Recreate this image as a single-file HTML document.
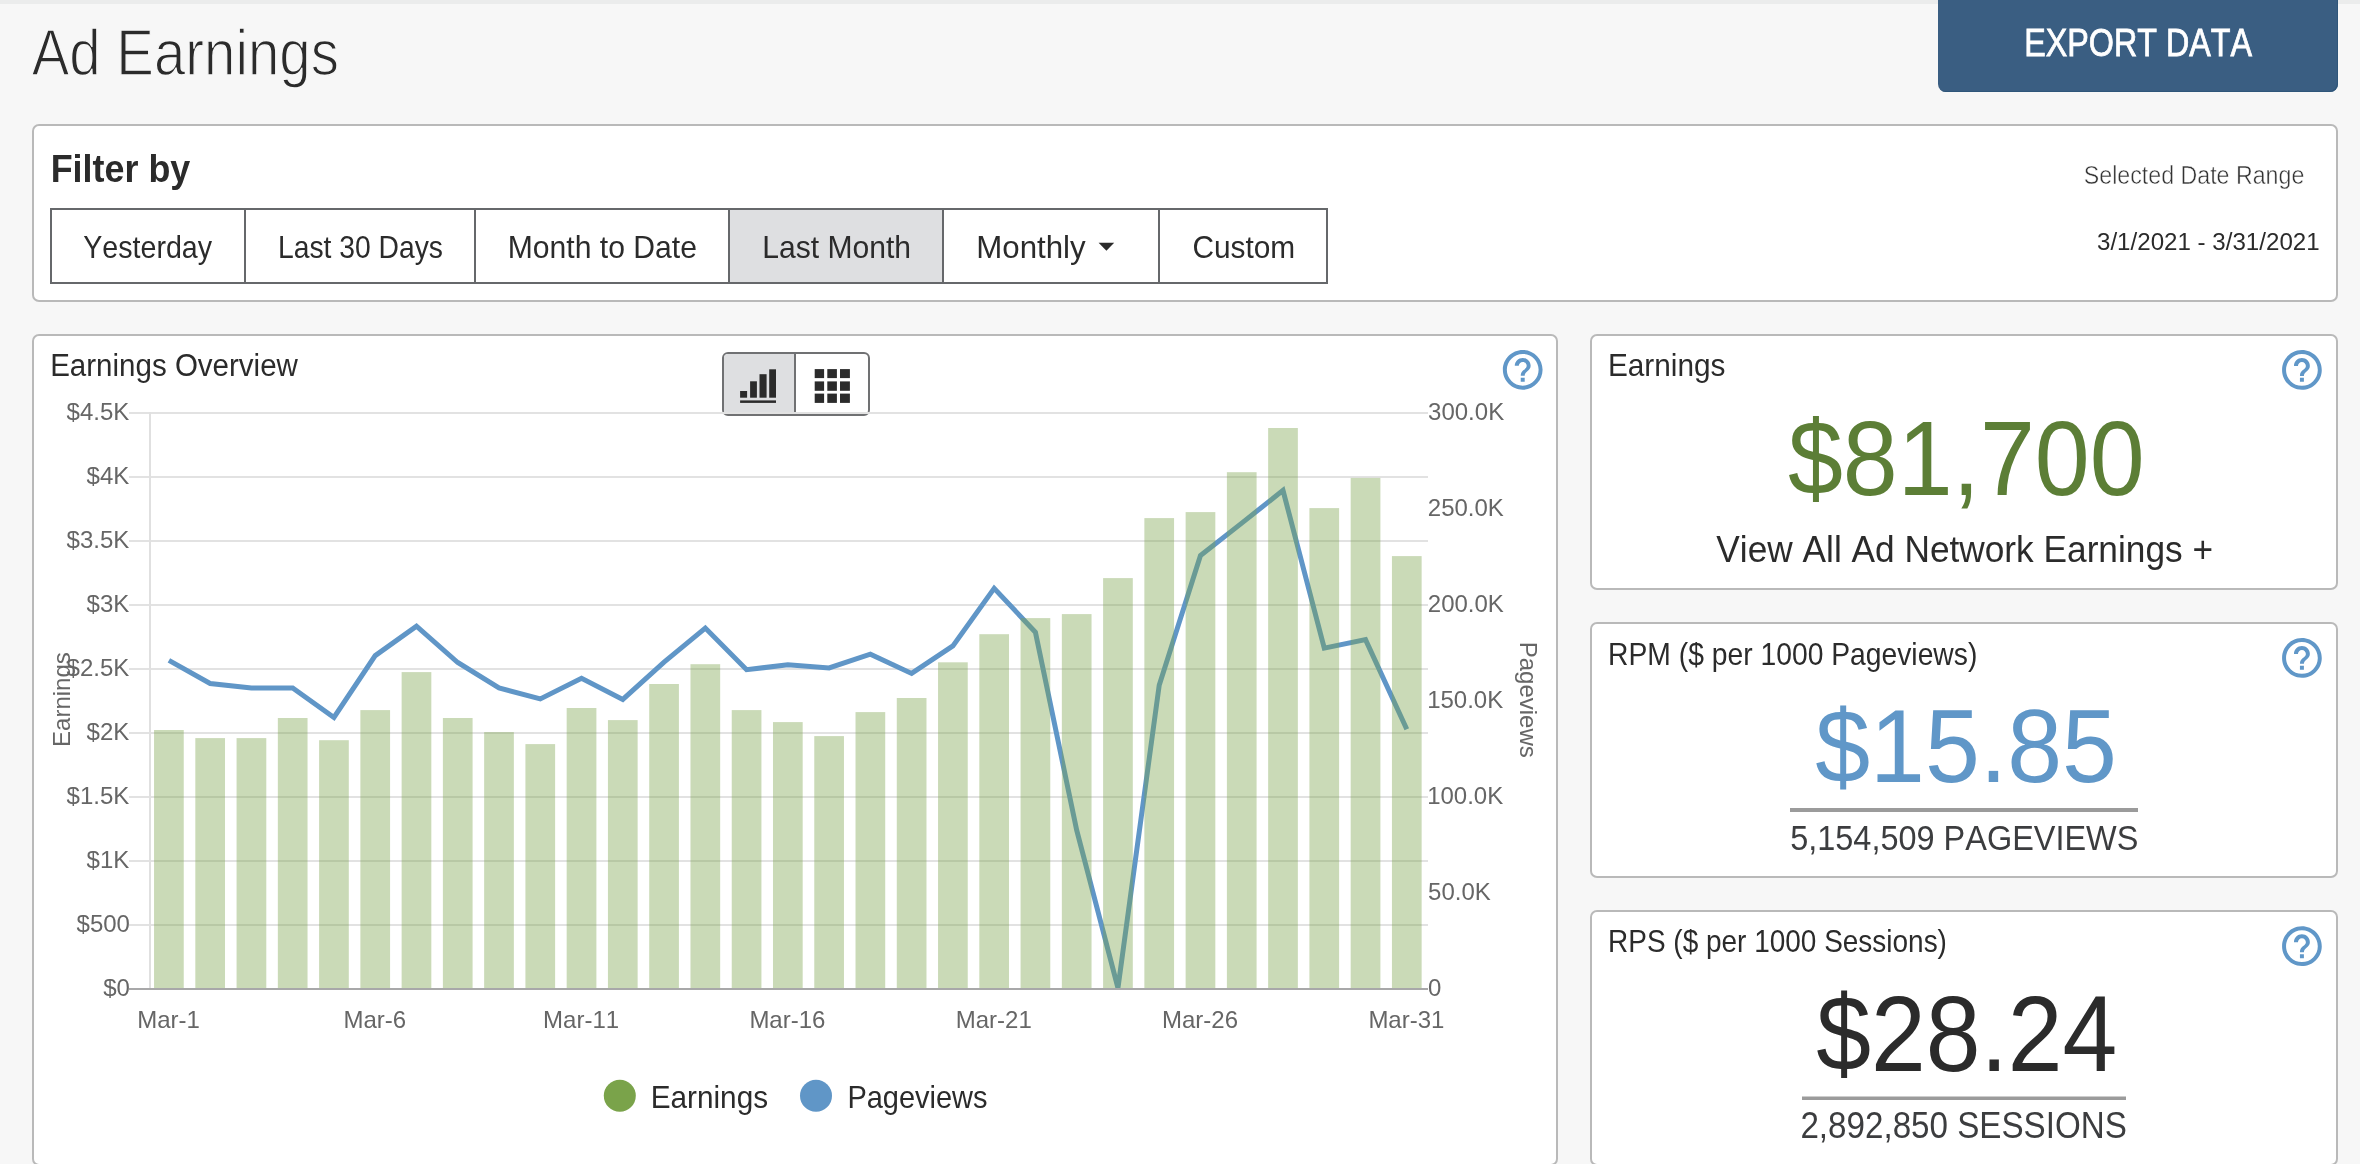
<!DOCTYPE html>
<html><head><meta charset="utf-8"><title>Ad Earnings</title>
<style>
html,body{margin:0;padding:0;}
body{width:2360px;height:1164px;overflow:hidden;background:#f7f7f7;position:relative;font-family:"Liberation Sans",sans-serif;}
.abs{position:absolute;box-sizing:border-box;}
.topband{left:0;top:0;width:2360px;height:4px;background:#ebecec;}
.export{left:1938px;top:-10px;width:400px;height:102px;background:#3a5e82;border-radius:0 0 8px 8px;box-shadow:inset -1px -1px 0 #2f567a;}
.card{background:#fff;border:2px solid #b9b9b9;border-radius:7px;}
.btngroup{left:50px;top:208px;width:1278px;height:76px;border:2px solid #66686b;background:#fff;}
.div{top:208px;width:2px;height:76px;background:#66686b;}
.active{left:730px;top:210px;width:212px;height:72px;background:#dedfe1;}
.toggle{left:722px;top:352px;width:148px;height:64px;border:2px solid #707173;border-radius:6px;background:#fff;overflow:hidden;}
.toggle .on{position:absolute;left:0;top:0;width:70px;height:60px;background:#dedfe1;}
.toggle .sep{position:absolute;left:70px;top:0;width:2px;height:60px;background:#707173;}
svg{position:absolute;left:0;top:0;will-change:transform;}
svg text{font-family:"Liberation Sans",sans-serif;font-kerning:none;}
</style></head>
<body>
<div class="abs topband"></div>
<div class="abs export"></div>
<div class="abs card" style="left:32px;top:124px;width:2306px;height:178px;"></div>
<div class="abs btngroup"></div>
<div class="abs active"></div>
<div class="abs div" style="left:244px"></div>
<div class="abs div" style="left:474px"></div>
<div class="abs div" style="left:728px"></div>
<div class="abs div" style="left:942px"></div>
<div class="abs div" style="left:1158px"></div>
<div class="abs card" style="left:32px;top:334px;width:1526px;height:832px;"></div>
<div class="abs card" style="left:1590px;top:334px;width:748px;height:256px;"></div>
<div class="abs card" style="left:1590px;top:622px;width:748px;height:256px;"></div>
<div class="abs card" style="left:1590px;top:910px;width:748px;height:256px;"></div>
<div class="abs toggle"><div class="on"></div><div class="sep"></div></div>
<svg width="2360" height="1164" viewBox="0 0 2360 1164">
<rect x="129" y="412" width="1299" height="2" fill="#e2e2e2"/>
<rect x="129" y="476" width="1299" height="2" fill="#e2e2e2"/>
<rect x="129" y="540" width="1299" height="2" fill="#e2e2e2"/>
<rect x="129" y="604" width="1299" height="2" fill="#e2e2e2"/>
<rect x="129" y="668" width="1299" height="2" fill="#e2e2e2"/>
<rect x="129" y="732" width="1299" height="2" fill="#e2e2e2"/>
<rect x="129" y="796" width="1299" height="2" fill="#e2e2e2"/>
<rect x="129" y="860" width="1299" height="2" fill="#e2e2e2"/>
<rect x="129" y="924" width="1299" height="2" fill="#e2e2e2"/>
<rect x="149" y="412" width="2" height="576" fill="#e0e0e0"/>
<clipPath id="plot"><rect x="140" y="300" width="1300" height="688"/></clipPath>
<polyline clip-path="url(#plot)" points="168.90,660.40 210.16,683.50 251.43,687.90 292.69,687.90 333.95,717.50 375.22,655.60 416.48,626.10 457.74,662.50 499.00,687.90 540.27,698.90 581.53,678.30 622.79,699.40 664.06,662.10 705.32,628.10 746.58,669.70 787.84,664.80 829.11,667.90 870.37,654.20 911.63,673.40 952.90,645.90 994.16,588.40 1035.42,632.20 1076.69,830.20 1117.95,988.00 1159.21,685.20 1200.48,555.50 1241.74,523.10 1283.00,490.40 1324.26,648.10 1365.53,639.60 1406.79,729.30" fill="none" stroke="#6096c7" stroke-width="5" stroke-linejoin="miter" stroke-miterlimit="10"/>
<rect x="154.05" y="730.00" width="29.7" height="258.00" fill="rgb(122,163,74)" fill-opacity="0.4"/>
<rect x="195.31" y="738.10" width="29.7" height="249.90" fill="rgb(122,163,74)" fill-opacity="0.4"/>
<rect x="236.58" y="738.10" width="29.7" height="249.90" fill="rgb(122,163,74)" fill-opacity="0.4"/>
<rect x="277.84" y="718.00" width="29.7" height="270.00" fill="rgb(122,163,74)" fill-opacity="0.4"/>
<rect x="319.10" y="740.20" width="29.7" height="247.80" fill="rgb(122,163,74)" fill-opacity="0.4"/>
<rect x="360.37" y="710.10" width="29.7" height="277.90" fill="rgb(122,163,74)" fill-opacity="0.4"/>
<rect x="401.63" y="672.10" width="29.7" height="315.90" fill="rgb(122,163,74)" fill-opacity="0.4"/>
<rect x="442.89" y="718.00" width="29.7" height="270.00" fill="rgb(122,163,74)" fill-opacity="0.4"/>
<rect x="484.15" y="732.10" width="29.7" height="255.90" fill="rgb(122,163,74)" fill-opacity="0.4"/>
<rect x="525.42" y="744.10" width="29.7" height="243.90" fill="rgb(122,163,74)" fill-opacity="0.4"/>
<rect x="566.68" y="708.00" width="29.7" height="280.00" fill="rgb(122,163,74)" fill-opacity="0.4"/>
<rect x="607.94" y="720.10" width="29.7" height="267.90" fill="rgb(122,163,74)" fill-opacity="0.4"/>
<rect x="649.21" y="684.00" width="29.7" height="304.00" fill="rgb(122,163,74)" fill-opacity="0.4"/>
<rect x="690.47" y="664.20" width="29.7" height="323.80" fill="rgb(122,163,74)" fill-opacity="0.4"/>
<rect x="731.73" y="710.10" width="29.7" height="277.90" fill="rgb(122,163,74)" fill-opacity="0.4"/>
<rect x="772.99" y="722.10" width="29.7" height="265.90" fill="rgb(122,163,74)" fill-opacity="0.4"/>
<rect x="814.26" y="736.10" width="29.7" height="251.90" fill="rgb(122,163,74)" fill-opacity="0.4"/>
<rect x="855.52" y="712.10" width="29.7" height="275.90" fill="rgb(122,163,74)" fill-opacity="0.4"/>
<rect x="896.78" y="698.00" width="29.7" height="290.00" fill="rgb(122,163,74)" fill-opacity="0.4"/>
<rect x="938.05" y="662.30" width="29.7" height="325.70" fill="rgb(122,163,74)" fill-opacity="0.4"/>
<rect x="979.31" y="634.20" width="29.7" height="353.80" fill="rgb(122,163,74)" fill-opacity="0.4"/>
<rect x="1020.57" y="618.10" width="29.7" height="369.90" fill="rgb(122,163,74)" fill-opacity="0.4"/>
<rect x="1061.84" y="614.10" width="29.7" height="373.90" fill="rgb(122,163,74)" fill-opacity="0.4"/>
<rect x="1103.10" y="578.10" width="29.7" height="409.90" fill="rgb(122,163,74)" fill-opacity="0.4"/>
<rect x="1144.36" y="518.10" width="29.7" height="469.90" fill="rgb(122,163,74)" fill-opacity="0.4"/>
<rect x="1185.63" y="512.10" width="29.7" height="475.90" fill="rgb(122,163,74)" fill-opacity="0.4"/>
<rect x="1226.89" y="472.20" width="29.7" height="515.80" fill="rgb(122,163,74)" fill-opacity="0.4"/>
<rect x="1268.15" y="428.00" width="29.7" height="560.00" fill="rgb(122,163,74)" fill-opacity="0.4"/>
<rect x="1309.41" y="508.10" width="29.7" height="479.90" fill="rgb(122,163,74)" fill-opacity="0.4"/>
<rect x="1350.68" y="477.90" width="29.7" height="510.10" fill="rgb(122,163,74)" fill-opacity="0.4"/>
<rect x="1391.94" y="556.10" width="29.7" height="431.90" fill="rgb(122,163,74)" fill-opacity="0.4"/>
<rect x="129" y="988" width="1299" height="2" fill="#a8a8a9"/>
<circle cx="619.8" cy="1095.8" r="16" fill="#7aa34a"/>
<circle cx="816" cy="1095.8" r="16" fill="#6096c7"/>
<path transform="translate(1498.90,346.00) scale(1.985)" d="M11 18h2v-2h-2v2zm1-16C6.48 2 2 6.48 2 12s4.48 10 10 10 10-4.48 10-10S17.52 2 12 2zm0 18c-4.41 0-8-3.59-8-8s3.59-8 8-8 8 3.59 8 8-3.59 8-8 8zm0-14c-2.21 0-4 1.79-4 4h2c0-1.1.9-2 2-2s2 .9 2 2c0 2-3 1.75-3 5h2c0-2.25 3-2.5 3-5 0-2.21-1.79-4-4-4z" fill="#6097c8"/>
<path transform="translate(2278.10,346.10) scale(1.985)" d="M11 18h2v-2h-2v2zm1-16C6.48 2 2 6.48 2 12s4.48 10 10 10 10-4.48 10-10S17.52 2 12 2zm0 18c-4.41 0-8-3.59-8-8s3.59-8 8-8 8 3.59 8 8-3.59 8-8 8zm0-14c-2.21 0-4 1.79-4 4h2c0-1.1.9-2 2-2s2 .9 2 2c0 2-3 1.75-3 5h2c0-2.25 3-2.5 3-5 0-2.21-1.79-4-4-4z" fill="#6097c8"/>
<path transform="translate(2278.10,634.10) scale(1.985)" d="M11 18h2v-2h-2v2zm1-16C6.48 2 2 6.48 2 12s4.48 10 10 10 10-4.48 10-10S17.52 2 12 2zm0 18c-4.41 0-8-3.59-8-8s3.59-8 8-8 8 3.59 8 8-3.59 8-8 8zm0-14c-2.21 0-4 1.79-4 4h2c0-1.1.9-2 2-2s2 .9 2 2c0 2-3 1.75-3 5h2c0-2.25 3-2.5 3-5 0-2.21-1.79-4-4-4z" fill="#6097c8"/>
<path transform="translate(2278.10,922.40) scale(1.985)" d="M11 18h2v-2h-2v2zm1-16C6.48 2 2 6.48 2 12s4.48 10 10 10 10-4.48 10-10S17.52 2 12 2zm0 18c-4.41 0-8-3.59-8-8s3.59-8 8-8 8 3.59 8 8-3.59 8-8 8zm0-14c-2.21 0-4 1.79-4 4h2c0-1.1.9-2 2-2s2 .9 2 2c0 2-3 1.75-3 5h2c0-2.25 3-2.5 3-5 0-2.21-1.79-4-4-4z" fill="#6097c8"/>
<rect x="740.1" y="391.0" width="7.0" height="6.7" fill="#2b2b2b"/>
<rect x="750.1" y="381.3" width="6.8" height="16.4" fill="#2b2b2b"/>
<rect x="759.5" y="374.2" width="7.1" height="23.5" fill="#2b2b2b"/>
<rect x="769.2" y="369.3" width="6.8" height="28.4" fill="#2b2b2b"/>
<rect x="740.1" y="400.4" width="35.9" height="2.5" fill="#2b2b2b"/>
<rect x="814.7" y="369.1" width="9.4" height="9.0" fill="#2b2b2b"/>
<rect x="814.7" y="381.4" width="9.4" height="9.4" fill="#2b2b2b"/>
<rect x="814.7" y="393.6" width="9.4" height="9.3" fill="#2b2b2b"/>
<rect x="827.3" y="369.1" width="9.6" height="9.0" fill="#2b2b2b"/>
<rect x="827.3" y="381.4" width="9.6" height="9.4" fill="#2b2b2b"/>
<rect x="827.3" y="393.6" width="9.6" height="9.3" fill="#2b2b2b"/>
<rect x="840.0" y="369.1" width="9.9" height="9.0" fill="#2b2b2b"/>
<rect x="840.0" y="381.4" width="9.9" height="9.4" fill="#2b2b2b"/>
<rect x="840.0" y="393.6" width="9.9" height="9.3" fill="#2b2b2b"/>
<path d="M1098.6 242.7 L1114.2 242.7 L1106.4 250.8 Z" fill="#2b2b2b"/>
<text x="31.69" y="74.70" font-size="64.10" font-weight="normal" fill="#2b2b2b" textLength="307.25" lengthAdjust="spacingAndGlyphs" stroke="#f7f7f7" stroke-width="1.4">Ad Earnings</text>
<text x="2024.25" y="55.90" font-size="38.37" font-weight="normal" fill="#ffffff" textLength="227.81" lengthAdjust="spacingAndGlyphs" stroke="#ffffff" stroke-width="0.8">EXPORT DATA</text>
<text x="50.70" y="181.90" font-size="38.81" font-weight="bold" fill="#2b2b2b" textLength="139.59" lengthAdjust="spacingAndGlyphs">Filter by</text>
<text x="2083.75" y="184.10" font-size="26.60" font-weight="normal" fill="#333333" textLength="220.58" lengthAdjust="spacingAndGlyphs" stroke="#ffffff" stroke-width="0.5">Selected Date Range</text>
<text x="2096.98" y="249.70" font-size="24.42" font-weight="normal" fill="#2b2b2b" textLength="222.70" lengthAdjust="spacingAndGlyphs">3/1/2021 - 3/31/2021</text>
<text x="83.27" y="258.00" font-size="31.10" font-weight="normal" fill="#2b2b2b" textLength="128.78" lengthAdjust="spacingAndGlyphs">Yesterday</text>
<text x="277.98" y="258.00" font-size="31.10" font-weight="normal" fill="#2b2b2b" textLength="165.04" lengthAdjust="spacingAndGlyphs">Last 30 Days</text>
<text x="507.73" y="258.00" font-size="31.10" font-weight="normal" fill="#2b2b2b" textLength="189.21" lengthAdjust="spacingAndGlyphs">Month to Date</text>
<text x="762.23" y="258.00" font-size="31.10" font-weight="normal" fill="#2b2b2b" textLength="148.82" lengthAdjust="spacingAndGlyphs">Last Month</text>
<text x="976.24" y="258.00" font-size="31.10" font-weight="normal" fill="#2b2b2b" textLength="109.42" lengthAdjust="spacingAndGlyphs">Monthly</text>
<text x="1192.38" y="258.00" font-size="31.10" font-weight="normal" fill="#2b2b2b" textLength="102.88" lengthAdjust="spacingAndGlyphs">Custom</text>
<text x="50.18" y="375.80" font-size="30.81" font-weight="normal" fill="#2b2b2b" textLength="247.75" lengthAdjust="spacingAndGlyphs">Earnings Overview</text>
<text x="66.55" y="419.80" font-size="24.00" font-weight="normal" fill="#666666">$4.5K</text>
<text x="86.57" y="483.77" font-size="24.00" font-weight="normal" fill="#666666">$4K</text>
<text x="66.55" y="547.73" font-size="24.00" font-weight="normal" fill="#666666">$3.5K</text>
<text x="86.57" y="611.70" font-size="24.00" font-weight="normal" fill="#666666">$3K</text>
<text x="66.55" y="675.67" font-size="24.00" font-weight="normal" fill="#666666">$2.5K</text>
<text x="86.57" y="739.63" font-size="24.00" font-weight="normal" fill="#666666">$2K</text>
<text x="66.55" y="803.60" font-size="24.00" font-weight="normal" fill="#666666">$1.5K</text>
<text x="86.57" y="867.57" font-size="24.00" font-weight="normal" fill="#666666">$1K</text>
<text x="76.55" y="931.53" font-size="24.00" font-weight="normal" fill="#666666">$500</text>
<text x="103.24" y="995.50" font-size="24.00" font-weight="normal" fill="#666666">$0</text>
<text x="1428.09" y="419.80" font-size="24.00" font-weight="normal" fill="#666666">300.0K</text>
<text x="1427.79" y="515.75" font-size="24.00" font-weight="normal" fill="#666666">250.0K</text>
<text x="1427.79" y="611.70" font-size="24.00" font-weight="normal" fill="#666666">200.0K</text>
<text x="1427.17" y="707.65" font-size="24.00" font-weight="normal" fill="#666666">150.0K</text>
<text x="1427.17" y="803.60" font-size="24.00" font-weight="normal" fill="#666666">100.0K</text>
<text x="1428.04" y="899.55" font-size="24.00" font-weight="normal" fill="#666666">50.0K</text>
<text x="1428.06" y="995.50" font-size="24.00" font-weight="normal" fill="#666666">0</text>
<text x="137.17" y="1028.00" font-size="24.00" font-weight="normal" fill="#666666">Mar-1</text>
<text x="343.42" y="1028.00" font-size="24.00" font-weight="normal" fill="#666666">Mar-6</text>
<text x="543.12" y="1028.00" font-size="24.00" font-weight="normal" fill="#666666">Mar-11</text>
<text x="749.38" y="1028.00" font-size="24.00" font-weight="normal" fill="#666666">Mar-16</text>
<text x="955.75" y="1028.00" font-size="24.00" font-weight="normal" fill="#666666">Mar-21</text>
<text x="1162.01" y="1028.00" font-size="24.00" font-weight="normal" fill="#666666">Mar-26</text>
<text x="1368.38" y="1028.00" font-size="24.00" font-weight="normal" fill="#666666">Mar-31</text>
<text transform="translate(70.4,699) rotate(-90)" x="-47.91" y="0" font-size="24" fill="#666666">Earnings</text>
<text transform="translate(1519.5,700.3) rotate(90)" x="-58.58" y="0" font-size="24" fill="#666666">Pageviews</text>
<text x="650.66" y="1108.10" font-size="30.96" font-weight="normal" fill="#2b2b2b" textLength="117.42" lengthAdjust="spacingAndGlyphs">Earnings</text>
<text x="847.42" y="1108.10" font-size="30.96" font-weight="normal" fill="#2b2b2b" textLength="140.12" lengthAdjust="spacingAndGlyphs">Pageviews</text>
<text x="1607.96" y="376.20" font-size="31.25" font-weight="normal" fill="#2b2b2b" textLength="117.52" lengthAdjust="spacingAndGlyphs">Earnings</text>
<text x="1608.08" y="664.50" font-size="31.25" font-weight="normal" fill="#2b2b2b" textLength="369.27" lengthAdjust="spacingAndGlyphs">RPM ($ per 1000 Pageviews)</text>
<text x="1608.11" y="952.10" font-size="31.10" font-weight="normal" fill="#2b2b2b" textLength="338.83" lengthAdjust="spacingAndGlyphs">RPS ($ per 1000 Sessions)</text>
<text x="1787.94" y="494.50" font-size="105.73" font-weight="normal" fill="#5c7e36" textLength="356.61" lengthAdjust="spacingAndGlyphs">$81,700</text>
<text x="1815.24" y="781.90" font-size="104.15" font-weight="normal" fill="#6097c8" textLength="301.70" lengthAdjust="spacingAndGlyphs">$15.85</text>
<text x="1816.24" y="1071.10" font-size="107.02" font-weight="normal" fill="#2b2b2b" textLength="301.04" lengthAdjust="spacingAndGlyphs">$28.24</text>
<text x="1716.35" y="561.60" font-size="36.77" font-weight="normal" fill="#2b2b2b" textLength="496.69" lengthAdjust="spacingAndGlyphs">View All Ad Network Earnings +</text>
<text x="1790.20" y="849.70" font-size="35.61" font-weight="normal" fill="#3c3d3f" textLength="348.19" lengthAdjust="spacingAndGlyphs">5,154,509 PAGEVIEWS</text>
<text x="1800.43" y="1137.90" font-size="36.34" font-weight="normal" fill="#3c3d3f" textLength="326.39" lengthAdjust="spacingAndGlyphs">2,892,850 SESSIONS</text>
<rect x="1790" y="808" width="348" height="4" fill="#9b9b9b"/>
<rect x="1802" y="1096.5" width="324" height="3.5" fill="#9b9b9b"/>
</svg>
</body></html>
